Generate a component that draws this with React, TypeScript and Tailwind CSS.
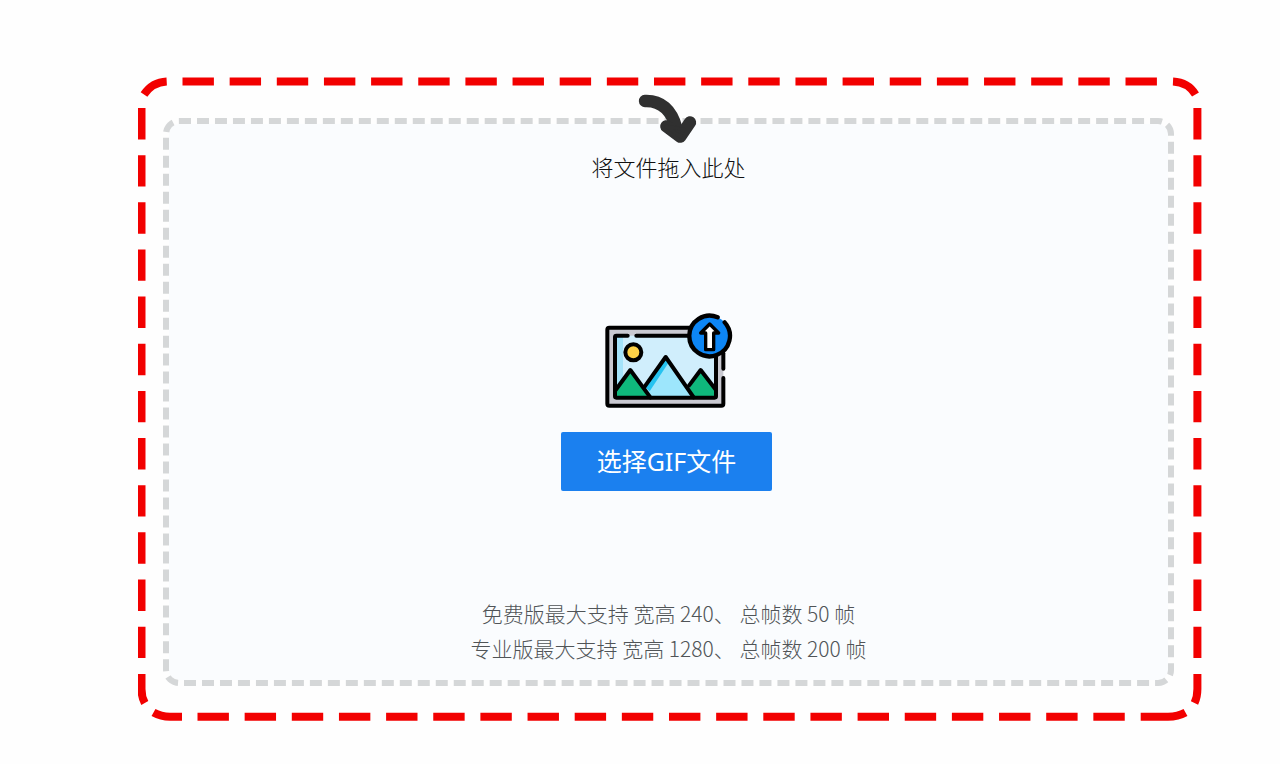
const limits = [
  { plan: '免费版', size: 240, frames: 50 },
  { plan: '专业版', size: 1280, frames: 200 },
]

function HighlightFrame() {
  return (
    <svg className="absolute inset-0 w-full h-full pointer-events-none" viewBox="0 0 1064 644" preserveAspectRatio="none" fill="none" stroke="#f20000" strokeWidth="8" aria-hidden="true">
      {/* Sides */}
      <path d="M44.5 4.5H1019" strokeDasharray="31.4 15.75" />
      <path d="M59.5 639.7H987" strokeDasharray="31.4 15.75" />
      <path d="M3.5 31V581" strokeDasharray="31.4 15.75" />
      <path d="M1059.4 31V581" strokeDasharray="31.4 15.75" />

      {/* Corners */}
      <path d="M6 17.5C11 10 19 5 28.7 4.5" />
      <path d="M1035 4.5C1045 5 1053 10 1057.5 17.5" />
      <path d="M1059.4 597V612Q1059.4 620 1056.5 626" />
      <path d="M1002.7 639.7H1030Q1040 639.7 1047.5 635.5" />
      <path d="M15.5 635.5Q23 639.7 32 639.7H44" />
      <path d="M3.5 597V612Q3.5 620 6.8 626" />
    </svg>
  )
}

function DropArrow() {
  return (
    <svg className="absolute -top-8 left-1/2 -translate-x-1/2 w-16 h-14" viewBox="4 -2 192 168" fill="none" stroke="#303030" strokeWidth="37" strokeLinecap="round" strokeLinejoin="round" aria-hidden="true">
      <path d="M28 25C76 23 108 52 122 106" />
      <path d="M92 101L134 132L163 89" />
      <path d="M92 101L134 132L144 110Z" fill="#303030" strokeWidth="10" />
    </svg>
  )
}

function UploadPicture() {
  return (
    <svg className="w-[132px] h-24" viewBox="32 36 396 288" fill="none" stroke="#000" strokeWidth="12" strokeLinecap="round" strokeLinejoin="round" aria-hidden="true">
      {/* Frame and sky */}
      <rect x="51" y="83" width="348" height="234" rx="6" fill="#c9c9d1" stroke="none" />
      <rect x="74" y="107" width="303" height="186" fill="#d0eefc" stroke="none" />
      <path d="M78 110H98V240L78 270Z" fill="#a4e3fa" stroke="none" />

      {/* Mountains */}
      <path d="M76 276L120 210L180 292H76Z" fill="#0fb87c" stroke="none" />
      <path d="M377 276L331 210L280 292H377Z" fill="#0fb87c" stroke="none" />
      <path d="M165 262L226 171L308 292H180Z" fill="#9de6fc" stroke="none" />
      <path d="M165 262L226 171L236 186L178 274Z" fill="#25c3f0" stroke="none" />
      <path d="M76 270L120 210L180 292" />
      <path d="M163 260L226 171L310 292" />
      <path d="M296 257L331 210L377 270" />

      <path d="M112 107H78Q74 107 74 111V289Q74 293 78 293H373Q377 293 377 289V170" />
      <path d="M138 107H300" />
      <path d="M300 83H57Q51 83 51 89V311Q51 317 57 317H393Q399 317 399 311V234" />
      <path d="M399 206V160" />

      <circle cx="129" cy="157" r="24" fill="#ffd247" />

      {/* Upload badge */}
      <circle cx="358" cy="108" r="61" fill="#0d86f5" stroke="none" />
      <path d="M382 52A61 61 0 1 0 403 67" strokeWidth="13" />
      <path d="M358 72L331 99H346V149H370V99H385Z" fill="#fff" strokeWidth="10" />
    </svg>
  )
}

export default function App() {
  return (
    <main className="min-h-screen bg-[#fefefe] pt-[77px] pr-[78px] pb-10 pl-[138px] font-['Noto_Sans_CJK_SC',sans-serif]">
      <div className="relative pt-[41px] pr-7 pb-[35px] pl-[25px]">
        <HighlightFrame />

        <section className="relative flex flex-col items-center rounded-2xl border-6 border-dashed border-[#d5d7d8] bg-[#fafcfe] bg-clip-padding px-4 pt-7 pb-[14px]">
          <DropArrow />
          <p className="text-[22px] leading-7 font-light text-[#101010]">将文件拖入此处</p>

          <div className="mt-[132px] flex flex-col items-center gap-6 pr-1">
            <UploadPicture />
            <button type="button" className="h-[59px] rounded-xs bg-[#1b80ef] px-9 font-['Noto_Sans','Noto_Sans_CJK_SC',sans-serif] text-[25px] text-white">
              选择GIF文件
            </button>
          </div>

          <div className="mt-[105px] text-center text-[21px] leading-[35px] font-light text-[#505457]">
            {limits.map(l => (
              <p key={l.plan}>
                {l.plan}最大支持 宽高 {l.size}、 总帧数 {l.frames} 帧
              </p>
            ))}
          </div>
        </section>
      </div>
    </main>
  )
}
